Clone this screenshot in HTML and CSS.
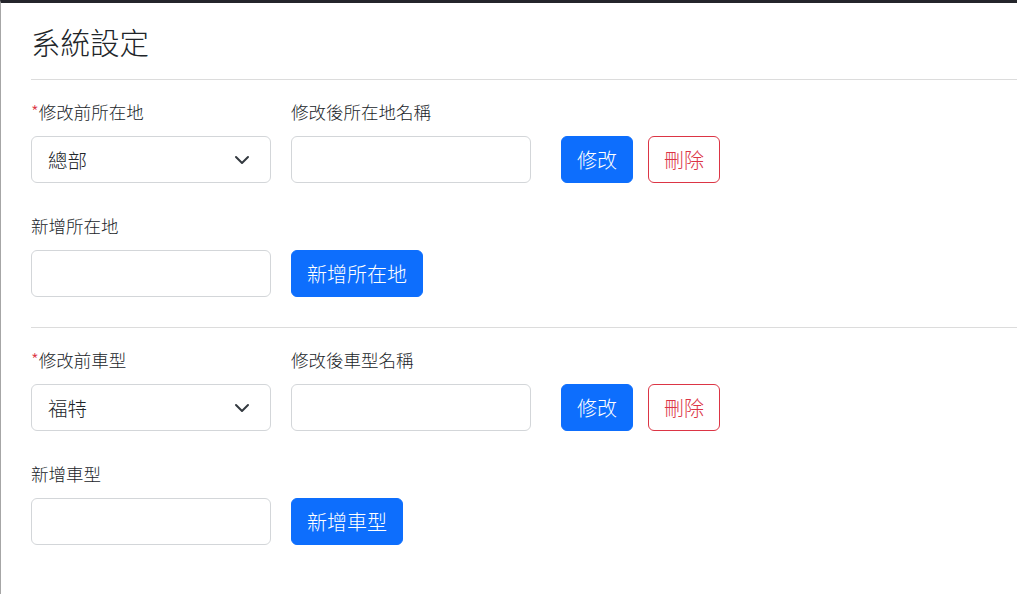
FILE: index.html
```html
<!DOCTYPE html>
<html lang="zh-Hant">
<head>
<meta charset="utf-8">
<title>系統設定</title>
<link rel="stylesheet" href="styles.css">
</head>
<body>
<div class="page">
  <h3 class="title">系統設定</h3>
  <hr class="divider">

  <section class="group">
    <div class="row">
      <div class="field">
        <label class="label"><span class="req">*</span>修改前所在地</label>
        <div class="select">
          <span>總部</span>
          <svg class="chev" width="16" height="16" viewBox="0 0 16 16"><path d="M2 5l6 6 6-6" fill="none" stroke="#343a40" stroke-width="2" stroke-linecap="round" stroke-linejoin="round"/></svg>
        </div>
      </div>
      <div class="field">
        <label class="label">修改後所在地名稱</label>
        <div class="input"></div>
      </div>
      <div class="actions">
        <button class="btn btn-primary">修改</button>
        <button class="btn btn-outline-danger">刪除</button>
      </div>
    </div>
    <div class="row row-add">
      <div class="field">
        <label class="label">新增所在地</label>
        <div class="input"></div>
      </div>
      <div class="actions-add">
        <button class="btn btn-primary">新增所在地</button>
      </div>
    </div>
  </section>

  <hr class="divider divider-mid">

  <section class="group">
    <div class="row">
      <div class="field">
        <label class="label"><span class="req">*</span>修改前車型</label>
        <div class="select">
          <span>福特</span>
          <svg class="chev" width="16" height="16" viewBox="0 0 16 16"><path d="M2 5l6 6 6-6" fill="none" stroke="#343a40" stroke-width="2" stroke-linecap="round" stroke-linejoin="round"/></svg>
        </div>
      </div>
      <div class="field">
        <label class="label">修改後車型名稱</label>
        <div class="input"></div>
      </div>
      <div class="actions">
        <button class="btn btn-primary">修改</button>
        <button class="btn btn-outline-danger">刪除</button>
      </div>
    </div>
    <div class="row row-add">
      <div class="field">
        <label class="label">新增車型</label>
        <div class="input"></div>
      </div>
      <div class="actions-add">
        <button class="btn btn-primary">新增車型</button>
      </div>
    </div>
  </section>
</div>
</body>
</html>
```

FILE: styles.css
```css
* { box-sizing: border-box; }
html, body { height: 100%; }
body {
  margin: 0;
  background: #fff;
  color: #212529;
  font-family: "Noto Sans CJK TC", "Noto Sans", "Liberation Sans", sans-serif;
  font-size: 16px;
  font-weight: 300;
  line-height: 1.5;
  border-top: 3px solid #24252b;
  border-left: 1px solid #a6a6a6;
}
.page {
  padding: 0 0 0 30px;
}
.title {
  margin: 0 0 21px;
  padding-top: 21px;
  font-size: 29.5px;
  font-weight: 300;
  line-height: 34px;
}
.divider {
  margin: 0;
  border: 0;
  border-top: 1px solid #dcdcdc;
}
.divider-mid { margin-top: 30px; }
.group { padding-top: 20px; }
.row {
  display: flex;
  align-items: flex-end;
  gap: 20px;
}
.row-add { margin-top: 31px; }
.field {
  display: flex;
  flex-direction: column;
  width: 240px;
}
.label {
  display: block;
  font-size: 17.5px;
  line-height: 24px;
  margin-bottom: 12px;
}
.req { color: #dc3545; }
.select, .input {
  height: 47px;
  border: 1px solid #d3d6d9;
  border-radius: 6px;
  background: #fff;
}
.select {
  display: flex;
  align-items: center;
  justify-content: space-between;
  padding: 0 20px 0 16px;
  font-size: 19.5px;
}
.chev { width: 16px; height: 16px; }
.actions {
  display: flex;
  gap: 15px;
  margin-left: 10px;
}
.btn {
  height: 47px;
  padding: 0 15px;
  border-radius: 6px;
  font-family: inherit;
  font-size: 20px;
  font-weight: 300;
  line-height: 30px;
  white-space: nowrap;
  cursor: pointer;
}
.btn-primary {
  background: #0d6efd;
  border: 1px solid #0d6efd;
  color: #fff;
}
.btn-outline-danger {
  background: #fff;
  border: 1px solid #dc3545;
  color: #dc3545;
}
```
